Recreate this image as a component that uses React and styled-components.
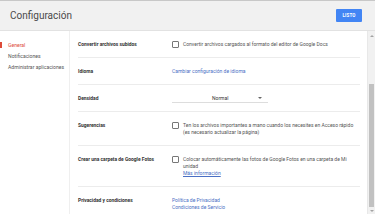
import React from "react";
import styled, { createGlobalStyle } from "styled-components";

const Global = createGlobalStyle`
  html, body {
    margin: 0;
    padding: 0;
    background: #fff;
    overflow: hidden;
  }
  body {
    font-family: Roboto, "Noto Sans", Arial, sans-serif;
  }
`;

const Page = styled.div`
  width: 375px;
  height: 214px;
  display: flex;
  flex-direction: column;
  overflow: hidden;
`;

const Header = styled.div`
  height: 31px;
  flex-shrink: 0;
  box-sizing: border-box;
  background: #f1f1f1;
  border-top: 1px solid #c8c8c8;
  border-bottom: 1px solid #e2e2e2;
  display: flex;
  align-items: center;
  justify-content: space-between;
  padding: 0 13px 0 10px;
`;

const Title = styled.div`
  font-size: 10px;
  color: #4a4a4a;
`;

const DoneButton = styled.div`
  width: 26px;
  height: 13px;
  background: #4285f4;
  color: #fff;
  font-size: 4.5px;
  font-weight: 700;
  display: flex;
  align-items: center;
  justify-content: center;
  border-radius: 1px;
  letter-spacing: 0.1px;
`;

const Body = styled.div`
  flex: 1;
  display: flex;
  min-height: 0;
`;

const Nav = styled.div`
  width: 70px;
  flex-shrink: 0;
  border-right: 1px solid #efefef;
  box-sizing: border-box;
  padding-top: 8px;
`;

const NavItem = styled.div`
  display: flex;
  align-items: center;
  height: 11px;
  font-size: 5.1px;
  white-space: nowrap;
  color: ${(p) => (p.active ? "#dd4b39" : "#555")};
`;

const Marker = styled.span`
  width: 2px;
  height: 6px;
  margin-right: 6px;
  background: ${(p) => (p.active ? "#dd4b39" : "transparent")};
`;

const Content = styled.div`
  flex: 1;
  padding: 0 7px 0 8px;
`;

const Row = styled.div`
  display: grid;
  grid-template-columns: 94px 1fr;
  padding: 10px 0 9px;
  border-bottom: 1px solid #ececec;
  font-size: 5px;
  line-height: 7px;
  white-space: nowrap;
  &:last-child {
    border-bottom-color: #e4e4e4;
  }
`;

const Label = styled.div`
  font-weight: 700;
  color: #333;
  font-size: 4.9px;
`;

const Value = styled.div`
  display: flex;
  align-items: flex-start;
  color: #555;
`;

const Box = styled.span`
  width: 5px;
  height: 5px;
  border: 1px solid #777;
  border-radius: 1px;
  flex-shrink: 0;
  margin: 0 4px 0 0;
`;

const Text = styled.div`
  display: flex;
  flex-direction: column;
`;

const Link = styled.span`
  color: #4a6fc4;
  text-decoration: ${(p) => (p.underline ? "underline" : "none")};
`;

const Select = styled.div`
  width: 96px;
  height: 8px;
  box-sizing: border-box;
  padding: 0 0 1px 40px;
  margin-bottom: -1px;
  border-bottom: 1px solid #ddd;
  display: flex;
  align-items: center;
  color: #333;
`;

const Arrow = styled.span`
  margin-left: 30px;
  width: 0;
  height: 0;
  border-left: 2px solid transparent;
  border-right: 2px solid transparent;
  border-top: 2px solid #666;
`;

const Scrollbar = styled.div`
  width: 8px;
  flex-shrink: 0;
  background: #f1f1f1;
  border-left: 1px solid #e8e8e8;
  box-sizing: border-box;
  display: flex;
  flex-direction: column;
  align-items: center;
  padding: 4px 0 2px;
`;

const Tri = styled.span`
  width: 0;
  height: 0;
  border-left: 2px solid transparent;
  border-right: 2px solid transparent;
  ${(p) => (p.up ? "border-bottom: 2px solid #a3a3a3;" : "border-top: 2px solid #a3a3a3;")}
`;

const Track = styled.div`
  flex: 1;
  width: 100%;
  display: flex;
  flex-direction: column;
  padding: 4px 1px 3px;
  box-sizing: border-box;
`;

const Thumb = styled.div`
  margin-top: auto;
  height: 123px;
  background: #c1c1c1;
`;

const navItems = ["General", "Notificaciones", "Administrar aplicaciones"];

export default function App() {
  return (
    <Page>
      <Global />
      <Header>
        <Title>Configuración</Title>
        <DoneButton>LISTO</DoneButton>
      </Header>
      <Body>
        <Nav>
          {navItems.map((item, i) => (
            <NavItem key={item} active={i === 0}>
              <Marker active={i === 0} />
              {item}
            </NavItem>
          ))}
        </Nav>
        <Content>
          <Row>
            <Label>Convertir archivos subidos</Label>
            <Value>
              <Box />
              <Text>Convertir archivos cargados al formato del editor de Google Docs</Text>
            </Value>
          </Row>
          <Row>
            <Label>Idioma</Label>
            <Value>
              <Link>Cambiar configuración de idioma</Link>
            </Value>
          </Row>
          <Row>
            <Label>Densidad</Label>
            <Value>
              <Select>
                Normal
                <Arrow />
              </Select>
            </Value>
          </Row>
          <Row>
            <Label>Sugerencias</Label>
            <Value>
              <Box />
              <Text>
                <span>Ten los archivos importantes a mano cuando los necesites en Acceso rápido</span>
                <span>(es necesario actualizar la página)</span>
              </Text>
            </Value>
          </Row>
          <Row>
            <Label>Crear una carpeta de Google Fotos</Label>
            <Value>
              <Box />
              <Text>
                <span>Colocar automáticamente las fotos de Google Fotos en una carpeta de Mi</span>
                <span>unidad</span>
                <Link underline>Más información</Link>
              </Text>
            </Value>
          </Row>
          <Row>
            <Label>Privacidad y condiciones</Label>
            <Value>
              <Text>
                <Link>Política de Privacidad</Link>
                <Link>Condiciones de Servicio</Link>
              </Text>
            </Value>
          </Row>
        </Content>
        <Scrollbar>
          <Tri up />
          <Track>
            <Thumb />
          </Track>
          <Tri />
        </Scrollbar>
      </Body>
    </Page>
  );
}
